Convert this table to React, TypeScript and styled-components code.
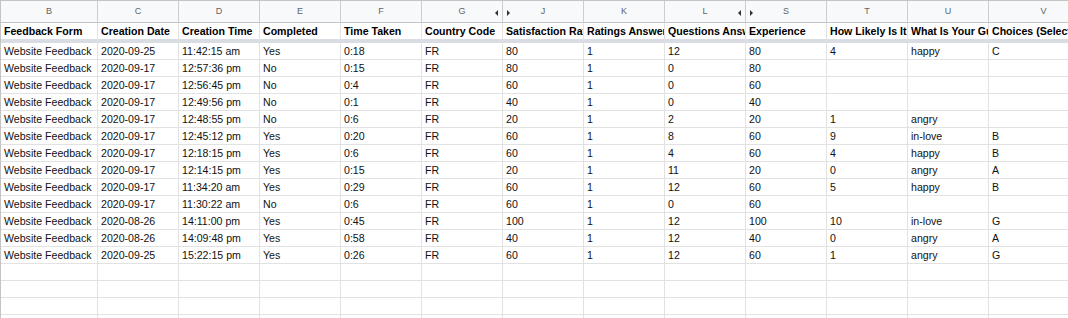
import React from "react";
import styled, { createGlobalStyle } from "styled-components";

const GlobalStyle = createGlobalStyle`
  html, body { margin: 0; padding: 0; background: #ffffff; }
  body { overflow: hidden; }
`;

const Viewport = styled.div`
  width: 1068px;
  height: 318px;
  overflow: hidden;
  background: #ffffff;
  font-family: "Liberation Sans", Arial, sans-serif;
`;

const Grid = styled.div`
  display: grid;
  grid-template-columns: 97px repeat(11, 81px) 110px;
  grid-auto-rows: auto;
  align-items: start;
  border-left: 1px solid #c4c4c4;
  border-top: 1px solid #c4c4c4;
  width: max-content;
`;

const LetterCell = styled.div`
  position: relative;
  height: 22px;
  box-sizing: border-box;
  background: #f8f9fa;
  border-right: 1px solid #cdcdcd;
  border-bottom: 1px solid #c4c4c4;
  color: #5f6368;
  font-size: 9px;
  line-height: 21px;
  text-align: center;
`;

const HiddenMark = styled.span<{ $side: "left" | "right" }>`
  position: absolute;
  top: 9px;
  width: 0;
  height: 0;
  border-top: 3px solid transparent;
  border-bottom: 3px solid transparent;
  ${(p) =>
    p.$side === "left"
      ? `right: 4px; border-right: 3px solid #333;`
      : `left: 4px; border-left: 3px solid #333;`}
`;

const HeadCell = styled.div`
  height: 20px;
  box-sizing: border-box;
  padding: 0 3px;
  border-right: 1px solid #e2e2e2;
  border-bottom: 4px solid #d9dde3;
  font-size: 10.6px;
  font-weight: bold;
  line-height: 16px;
  color: #000;
  white-space: nowrap;
  overflow: hidden;
`;

const DataCell = styled.div`
  height: 17px;
  box-sizing: border-box;
  padding: 0 3px;
  border-right: 1px solid #e2e2e2;
  border-bottom: 1px solid #e2e2e2;
  font-size: 10.6px;
  line-height: 16px;
  color: #111;
  white-space: nowrap;
  overflow: hidden;
`;

type Mark = "left" | "right" | undefined;
const letters: { l: string; mark?: Mark }[] = [
  { l: "B" },
  { l: "C" },
  { l: "D" },
  { l: "E" },
  { l: "F" },
  { l: "G", mark: "left" },
  { l: "J", mark: "right" },
  { l: "K" },
  { l: "L", mark: "left" },
  { l: "S", mark: "right" },
  { l: "T" },
  { l: "U" },
  { l: "V" },
];

const headers = [
  "Feedback Form",
  "Creation Date",
  "Creation Time",
  "Completed",
  "Time Taken",
  "Country Code",
  "Satisfaction Rating",
  "Ratings Answered",
  "Questions Answered",
  "Experience",
  "How Likely Is It",
  "What Is Your Gut Feeling",
  "Choices (Select One)",
];

const WF = "Website Feedback";
const rows: string[][] = [
  [WF, "2020-09-25", "11:42:15 am", "Yes", "0:18", "FR", "80", "1", "12", "80", "4", "happy", "C"],
  [WF, "2020-09-17", "12:57:36 pm", "No", "0:15", "FR", "80", "1", "0", "80", "", "", ""],
  [WF, "2020-09-17", "12:56:45 pm", "No", "0:4", "FR", "60", "1", "0", "60", "", "", ""],
  [WF, "2020-09-17", "12:49:56 pm", "No", "0:1", "FR", "40", "1", "0", "40", "", "", ""],
  [WF, "2020-09-17", "12:48:55 pm", "No", "0:6", "FR", "20", "1", "2", "20", "1", "angry", ""],
  [WF, "2020-09-17", "12:45:12 pm", "Yes", "0:20", "FR", "60", "1", "8", "60", "9", "in-love", "B"],
  [WF, "2020-09-17", "12:18:15 pm", "Yes", "0:6", "FR", "60", "1", "4", "60", "4", "happy", "B"],
  [WF, "2020-09-17", "12:14:15 pm", "Yes", "0:15", "FR", "20", "1", "11", "20", "0", "angry", "A"],
  [WF, "2020-09-17", "11:34:20 am", "Yes", "0:29", "FR", "60", "1", "12", "60", "5", "happy", "B"],
  [WF, "2020-09-17", "11:30:22 am", "No", "0:6", "FR", "60", "1", "0", "60", "", "", ""],
  [WF, "2020-08-26", "14:11:00 pm", "Yes", "0:45", "FR", "100", "1", "12", "100", "10", "in-love", "G"],
  [WF, "2020-08-26", "14:09:48 pm", "Yes", "0:58", "FR", "40", "1", "12", "40", "0", "angry", "A"],
  [WF, "2020-09-25", "15:22:15 pm", "Yes", "0:26", "FR", "60", "1", "12", "60", "1", "angry", "G"],
];

const emptyRows = 4;

export default function App() {
  return (
    <Viewport>
      <GlobalStyle />
      <Grid>
        {letters.map((c) => (
          <LetterCell key={`l-${c.l}`}>
            {c.l}
            {c.mark && <HiddenMark $side={c.mark} />}
          </LetterCell>
        ))}
        {headers.map((h, i) => (
          <HeadCell key={`h-${i}`}>{h}</HeadCell>
        ))}
        {rows.map((r, ri) =>
          r.map((v, ci) => <DataCell key={`d-${ri}-${ci}`}>{v}</DataCell>)
        )}
        {Array.from({ length: emptyRows }).map((_, ri) =>
          letters.map((_, ci) => <DataCell key={`e-${ri}-${ci}`} />)
        )}
      </Grid>
    </Viewport>
  );
}
